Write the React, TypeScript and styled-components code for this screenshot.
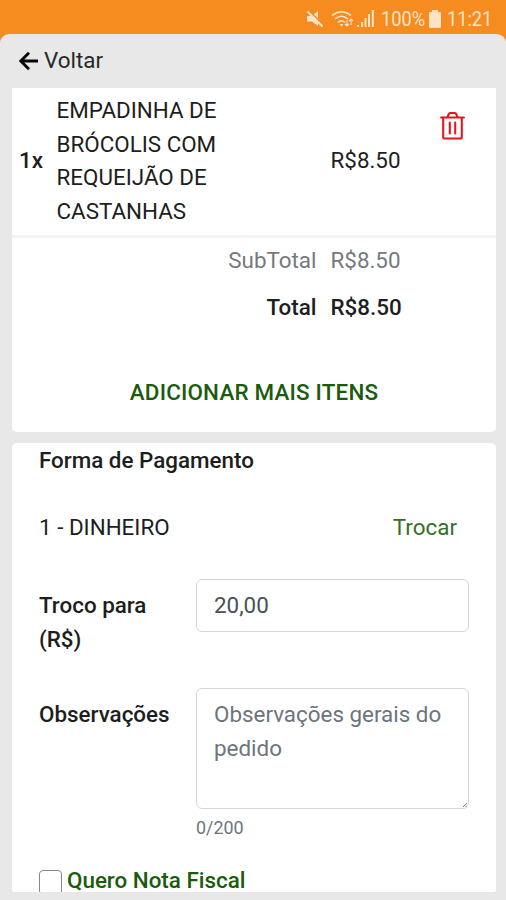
import React from "react";
import styled, { createGlobalStyle } from "styled-components";

const GlobalStyle = createGlobalStyle`
  *, *::before, *::after { box-sizing: border-box; }
  body {
    margin: 0;
    background: #f68b1f;
    font-family: Roboto, "Liberation Sans", sans-serif;
    font-size: 22.4px;
    line-height: 33.6px;
    color: #1c1e20;
  }
`;

const Screen = styled.div`
  height: 900px;
  display: flex;
  flex-direction: column;
  overflow: hidden;
  background: #f68b1f;
`;

const StatusBar = styled.header`
  flex: 0 0 34px;
  display: flex;
  align-items: center;
  justify-content: flex-end;
  padding: 4px 13px 0 0;
  color: #ffe3c6;
  font-size: 20px;
  line-height: 30px;
`;

const StatusIcon = styled.svg<{ $gap: number }>`
  flex: none;
  display: block;
  margin-right: ${(p) => p.$gap}px;
`;

const StatusText = styled.span<{ $width: number; $gap?: number }>`
  width: ${(p) => p.$width}px;
  margin-right: ${(p) => p.$gap ?? 0}px;
  white-space: nowrap;
  transform: scaleX(0.91);
  transform-origin: left center;
`;

const Sheet = styled.main`
  flex: 1;
  min-height: 0;
  display: flex;
  flex-direction: column;
  padding: 0 10px 8px 12px;
  background: #e8e8e8;
  border-radius: 9px 9px 0 0;
`;

const BackLink = styled.button`
  flex: 0 0 54px;
  display: flex;
  align-items: center;
  gap: 5px;
  padding: 0 0 1px 7px;
  border: 0;
  background: none;
  font: inherit;
  color: #26282a;
`;

const Card = styled.section<{ $grow?: boolean }>`
  flex: ${(p) => (p.$grow ? "1 1 0" : "0 0 344px")};
  min-height: 0;
  overflow: hidden;
  background: #fff;
  border-radius: ${(p) => (p.$grow ? "5px 5px 2px 2px" : "0 0 5px 5px")};
  margin-bottom: ${(p) => (p.$grow ? 0 : 11)}px;
`;

const ItemRow = styled.div`
  display: grid;
  grid-template-columns: 37.5px 274px 109px 1fr;
  align-items: center;
  height: 150px;
  padding: 6px 0 7px 7px;
  border-bottom: 3px solid #f3f3f3;
`;

const Quantity = styled.strong`
  font-weight: 500;
`;

const ItemName = styled.span`
  width: 190px;
`;

const RemoveButton = styled.button`
  align-self: start;
  justify-self: start;
  display: block;
  margin-top: 17px;
  padding: 0;
  border: 0;
  background: none;
  color: #e8141c;
`;

const TotalRow = styled.div<{ $strong?: boolean }>`
  display: grid;
  grid-template-columns: 304.5px 1fr;
  column-gap: 14px;
  height: 47px;
  padding-top: 6px;
  font-weight: ${(p) => (p.$strong ? 500 : 400)};
  color: ${(p) => (p.$strong ? "#1c1e20" : "#747a80")};
`;

const TotalLabel = styled.span`
  text-align: right;
`;

const AddMore = styled.button`
  display: block;
  margin: 44px auto 0;
  padding: 0;
  border: 0;
  background: none;
  font: inherit;
  font-weight: 500;
  letter-spacing: 0.19px;
  color: #1a5c0c;
`;

const PaymentBody = styled.div`
  padding: 1px 27px 0;
`;

const Heading = styled.h2`
  margin: 0;
  font-size: inherit;
  font-weight: 500;
`;

const PaymentMethod = styled.div`
  display: flex;
  justify-content: space-between;
  padding: 33px 12px 0 0;
`;

const ChangeLink = styled.span`
  color: #356f27;
`;

const Field = styled.div<{ $top: number }>`
  display: grid;
  grid-template-columns: 157px 273px;
  margin-top: ${(p) => p.$top}px;
`;

const Label = styled.label`
  padding-top: 10px;
  font-weight: 500;
`;

const Input = styled.input`
  width: 100%;
  height: 53px;
  padding: 0 17px 1px;
  border: 1.5px solid #d3d6d9;
  border-radius: 6px;
  font: inherit;
  color: #495057;
  background: #fff;
  outline: 0;
`;

const TextArea = styled.textarea`
  display: block;
  width: 100%;
  height: 121px;
  padding: 9px 17px;
  border: 1.5px solid #d3d6d9;
  border-radius: 6px;
  font: inherit;
  background: #fff;
  overflow: hidden;
  resize: none;
  outline: 0;
  &::placeholder { color: #6c757d; opacity: 1; }
`;

const NotesBox = styled.div`
  position: relative;
`;

const ResizeGrip = styled.svg`
  position: absolute;
  right: 2px;
  bottom: 2px;
`;

const Counter = styled.div`
  margin-top: 5px;
  font-size: 17.9px;
  line-height: 27px;
  color: #6c757d;
`;

const InvoiceOption = styled.label`
  display: flex;
  gap: 5px;
  margin-top: 23px;
  font-weight: 500;
  color: #1a5c0c;
`;

const Checkbox = styled.input`
  appearance: none;
  flex: none;
  width: 23px;
  height: 25px;
  margin: 6px 0 0;
  border: 1.5px solid #85888b;
  border-radius: 4px;
  background: #fff;
`;

const MutedIcon = () => (
  <StatusIcon $gap={7} width="18" height="18" viewBox="0 0 18 18" fill="currentColor">
    <path d="M1 6h5l6-5v15l-6-4.500H1z" />
    <path d="M3 0.500l14.500 14.500" stroke="#f68b1f" strokeWidth="1.600" />
    <path d="M1.500 1.500l15 15" stroke="currentColor" strokeWidth="2" />
  </StatusIcon>
);

const WifiIcon = () => (
  <StatusIcon $gap={3} width="23" height="18" viewBox="0 0 23 18" fill="none" stroke="currentColor" strokeWidth="1.6">
    <path d="M1 5.500Q10.500-2 20 5.500M4 9q6.500-5.500 13 0M7 12.300q3.500-3 7 0" />
    <path d="M8.500 14h4l-2 2.500z" fill="currentColor" stroke="none" />
    <path d="M16 10v6m-2-2l2 2 2-2M20 15V9m-2 2l2-2 2 2" strokeWidth="1.100" />
  </StatusIcon>
);

const SignalIcon = () => (
  <StatusIcon $gap={7} width="17" height="18" viewBox="0 0 17 18" fill="currentColor">
    <path d="M0 15h2v2H0zM4 12h2v5H4zM7.500 8h2v9h-2zM11 4h2v13h-2zM14.800 0h2v17h-2z" />
  </StatusIcon>
);

const BatteryIcon = () => (
  <StatusIcon $gap={6} width="12" height="18" viewBox="0 0 12 18" fill="currentColor">
    <path d="M3 0h6v2h2q1 0 1 1v14q0 1-1 1H1q-1 0-1-1V3q0-1 1-1h2z" />
  </StatusIcon>
);

const ArrowLeft = () => (
  <svg width="20" height="20" viewBox="0 0 20 20" fill="none" stroke="#050505" strokeWidth="2.900">
    <path d="M19 10H2.500M10 1.800L1.800 10l8.200 8.200" />
  </svg>
);

const TrashIcon = () => (
  <svg width="25" height="29" viewBox="0 0 25 29" fill="none" stroke="currentColor" strokeWidth="2.100" strokeLinejoin="round" strokeLinecap="round">
    <path d="M1.100 6.500h22.800M3.200 6.500V26q0 1.500 1.500 1.500h15.600q1.500 0 1.500-1.500V6.500" />
    <path d="M7.500 6L9 2.800Q9.500 2 10.400 2h4.200q.9 0 1.400.8L17.500 6M9.800 11.500v11M15.200 11.500v11" />
  </svg>
);

export default function App() {
  return (
    <>
      <GlobalStyle />
      <Screen>
        <StatusBar>
          <MutedIcon />
          <WifiIcon />
          <SignalIcon />
          <StatusText $width={43} $gap={5}>100%</StatusText>
          <BatteryIcon />
          <StatusText $width={46}>11:21</StatusText>
        </StatusBar>
        <Sheet>
          <BackLink>
            <ArrowLeft />
            Voltar
          </BackLink>
          <Card>
            <ItemRow>
              <Quantity>1x</Quantity>
              <ItemName>EMPADINHA DE BRÓCOLIS COM REQUEIJÃO DE CASTANHAS</ItemName>
              <span>R$8.50</span>
              <RemoveButton aria-label="Remover">
                <TrashIcon />
              </RemoveButton>
            </ItemRow>
            <TotalRow>
              <TotalLabel>SubTotal</TotalLabel>
              <span>R$8.50</span>
            </TotalRow>
            <TotalRow $strong>
              <TotalLabel>Total</TotalLabel>
              <span>R$8.50</span>
            </TotalRow>
            <AddMore>ADICIONAR MAIS ITENS</AddMore>
          </Card>
          <Card $grow>
            <PaymentBody>
              <Heading>Forma de Pagamento</Heading>
              <PaymentMethod>
                <span>1 - DINHEIRO</span>
                <ChangeLink>Trocar</ChangeLink>
              </PaymentMethod>
              <Field $top={35}>
                <Label htmlFor="change">Troco para<br />(R$)</Label>
                <div>
                  <Input id="change" defaultValue="20,00" />
                </div>
              </Field>
              <Field $top={32}>
                <Label htmlFor="notes">Observações</Label>
                <div>
                  <NotesBox>
                    <TextArea id="notes" placeholder="Observações gerais do pedido" />
                    <ResizeGrip width="4" height="4" viewBox="0 0 4 4" stroke="#777" strokeWidth="1">
                      <path d="M0 4L4 0M2.500 4L4 2.500" />
                    </ResizeGrip>
                  </NotesBox>
                  <Counter>0/200</Counter>
                </div>
              </Field>
              <InvoiceOption>
                <Checkbox type="checkbox" />
                Quero Nota Fiscal
              </InvoiceOption>
            </PaymentBody>
          </Card>
        </Sheet>
      </Screen>
    </>
  );
}
